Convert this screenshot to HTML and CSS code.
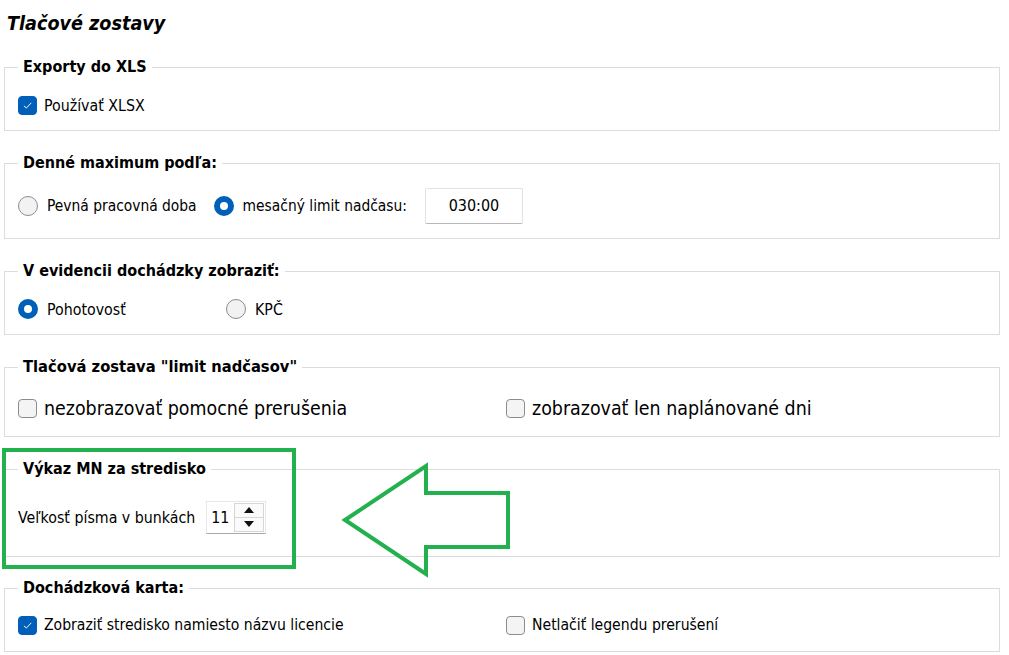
FILE: index.html
```html
<!DOCTYPE html>
<html lang="sk">

<head>
	<meta charset="UTF-8">
	<meta name="viewport" content="width=device-width, initial-scale=1.0">
	<title>Tlačové zostavy</title>

	<link rel="stylesheet" href="styles.css">
</head>

<body>
	<div class="page">
		<h1 class="title">Tlačové zostavy</h1>

		<fieldset class="grp g1">
			<legend>Exporty do XLS</legend>
			<div class="row">
				<label class="opt"><span class="chk on"><svg viewBox="0 0 19 19"><path d="M5.5 9.8 L8.2 12.4 L13.6 6.6" /></svg></span>Používať XLSX</label>
			</div>
		</fieldset>

		<fieldset class="grp g2">
			<legend>Denné maximum podľa:</legend>
			<div class="row">
				<label class="opt"><span class="rad"></span>Pevná pracovná doba</label>
				<label class="opt opt-b"><span class="rad on"></span>mesačný limit nadčasu:</label>
				<div class="txt">030:00</div>
			</div>
		</fieldset>

		<fieldset class="grp g3">
			<legend>V evidencii dochádzky zobraziť:</legend>
			<div class="row">
				<label class="opt col1"><span class="rad on"></span>Pohotovosť</label>
				<label class="opt"><span class="rad"></span>KPČ</label>
			</div>
		</fieldset>

		<fieldset class="grp g4">
			<legend>Tlačová zostava "limit nadčasov"</legend>
			<div class="row">
				<label class="opt col2"><span class="chk"></span>nezobrazovať pomocné prerušenia</label>
				<label class="opt"><span class="chk"></span>zobrazovať len naplánované dni</label>
			</div>
		</fieldset>

		<fieldset class="grp g5">
			<legend>Výkaz MN za stredisko</legend>
			<div class="row">
				<span class="lbl">Veľkosť písma v bunkách</span>
				<div class="spin">
					<span class="val">11</span>
					<div class="btns">
						<span class="up"></span>
						<span class="down"></span>
					</div>
				</div>
			</div>
		</fieldset>

		<fieldset class="grp g6">
			<legend>Dochádzková karta:</legend>
			<div class="row">
				<label class="opt col2"><span class="chk on"><svg viewBox="0 0 19 19"><path d="M5.5 9.8 L8.2 12.4 L13.6 6.6" /></svg></span>Zobraziť stredisko namiesto názvu licencie</label>
				<label class="opt"><span class="chk"></span>Netlačiť legendu prerušení</label>
			</div>
		</fieldset>

		<!-- zvýraznenie -->
		<div class="mark"></div>
		<svg class="arrow" width="180" height="124" viewBox="0 0 180 124">
			<path d="M12 62 L93 8 L93 35 L175 35 L175 89 L93 89 L93 116 Z" />
		</svg>
	</div>
</body>

</html>
```

FILE: styles.css
```css
* {
	margin: 0;
	padding: 0;
	box-sizing: border-box;
}

body {
	background: #fff;
	color: #000;
	font-family: "DejaVu Sans Condensed", "DejaVu Sans", sans-serif;
	font-size: 15.8px;
}

.page {
	position: relative;
	width: 1009px;
	height: 655px;
	padding: 12px 9px 0 4px;
	overflow: hidden;
}

.title {
	font-size: 19.6px;
	font-weight: bold;
	font-style: italic;
	line-height: 24px;
	padding-left: 3px;
	margin-bottom: 21px;
}

.grp {
	border: 1px solid #dcdcdc;
	padding: 0 13px;
	margin-bottom: 22px;
}

.grp legend {
	font-weight: bold;
	font-size: 16px;
	line-height: 20px;
	padding: 0 5px;
}

.g1 {
	padding-top: 16px;
	padding-bottom: 13px;
}

.g2 {
	padding-top: 15px;
	padding-bottom: 14px;
}

.g3 {
	padding-top: 16px;
	padding-bottom: 13px;
}

.g4 {
	padding-top: 19px;
	padding-bottom: 16px;
}

.g5 {
	padding-top: 21px;
	padding-bottom: 22px;
	margin-bottom: 21px;
}

.g6 {
	padding-top: 15px;
	padding-bottom: 14px;
}

.row {
	display: flex;
	align-items: center;
	height: 24px;
}

.g2 .row {
	height: 36px;
}

.g5 .row {
	height: 34px;
}

.opt {
	display: flex;
	align-items: center;
	gap: 7px;
}

.col1 {
	width: 208px;
}

.col2 {
	width: 488px;
}

.opt-b {
	margin-left: 17px;
}

.g2 .opt {
	font-size: 15.4px;
}

.chk {
	display: inline-block;
	width: 19px;
	height: 19px;
	border: 1px solid #8c8c8c;
	border-radius: 4px;
	background: #f4f4f4;
}

.chk.on {
	border-color: #005fb8;
	background: #005fb8;
}

.chk svg {
	display: block;
	width: 17px;
	height: 17px;
}

.chk path {
	fill: none;
	stroke: #fff;
	stroke-width: 1.1;
}

.rad {
	display: inline-block;
	width: 20px;
	height: 20px;
	border: 1px solid #8c8c8c;
	border-radius: 50%;
	background: #f2f2f2;
	margin-right: 2px;
}

.rad.on {
	border: 6px solid #005fb8;
	background: #fff;
}

.txt {
	width: 98px;
	height: 36px;
	margin-left: 18px;
	border: 1px solid #e2e2e2;
	border-bottom-color: #b8b8b8;
	border-radius: 2px;
	line-height: 34px;
	text-align: center;
	font-size: 16px;
}

.g4 legend {
	font-size: 16.4px;
}

.g4 .opt {
	font-size: 19.4px;
}

.g6 .opt {
	font-size: 15.6px;
}

.lbl {
	margin-right: 11px;
}

.spin {
	display: flex;
	width: 60px;
	height: 33px;
	border: 1px solid #e6e6e6;
	border-bottom-color: #a8a8a8;
}

.spin .val {
	flex: 1;
	line-height: 31px;
	padding-left: 4px;
}

.btns {
	display: flex;
	flex-direction: column;
	width: 30px;
	margin: 1px 1px 1px 0;
	border: 1px solid #d6d6d6;
}

.btns span {
	flex: 1;
	display: flex;
	align-items: center;
	justify-content: center;
	background: #fbfbfb;
}

.btns .up {
	border-bottom: 1px solid #d6d6d6;
}

.btns .up::before {
	content: "";
	border-left: 5px solid transparent;
	border-right: 5px solid transparent;
	border-bottom: 6px solid #111;
}

.btns .down::before {
	content: "";
	border-left: 5px solid transparent;
	border-right: 5px solid transparent;
	border-top: 6px solid #111;
}

.mark {
	position: absolute;
	left: 2px;
	top: 448px;
	width: 294px;
	height: 121px;
	border: 4px solid #22b14c;
}

.arrow {
	position: absolute;
	left: 333px;
	top: 458px;
}

.arrow path {
	fill: none;
	stroke: #22b14c;
	stroke-width: 4;
	stroke-linejoin: miter;
}
```
